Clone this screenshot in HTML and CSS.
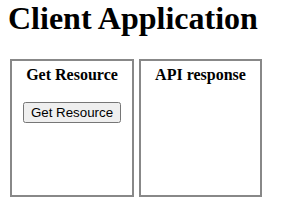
FILE: index.html
```html
<!DOCTYPE html>
<html lang="en">

<head>
    <meta charset="UTF-8">
    <title>Client Application</title>
    <link rel="stylesheet" href="styles.css">
</head>

<body>
    <h1>Client Application</h1>
    <div class="panels">
        <div class="panel">
            <h4>Get Resource</h4>
            <button class="get-btn">Get Resource</button>
        </div>
        <div class="panel">
            <h4>API response</h4>
            <div class="response"></div>
        </div>
    </div>
</body>

</html>
```

FILE: styles.css
```css
body {
    margin: 0 8px;
    font-family: "Liberation Serif", "Times New Roman", serif;
}

h1 {
    margin: 0 0 22px 0;
    font-size: 32px;
}

.panels {
    display: flex;
    gap: 5px;
    margin-left: 2px;
}

.panel {
    width: 120px;
    height: 129px;
    border: 2px solid #888;
    padding-top: 5px;
    text-align: center;
}

.panel:last-child {
    width: 119px;
}

h4 {
    margin: 0 0 18px 0;
    font-size: 16px;
}

.get-btn {
    font-family: "Liberation Sans", Arial, sans-serif;
    font-size: 13.33px;
}
```
